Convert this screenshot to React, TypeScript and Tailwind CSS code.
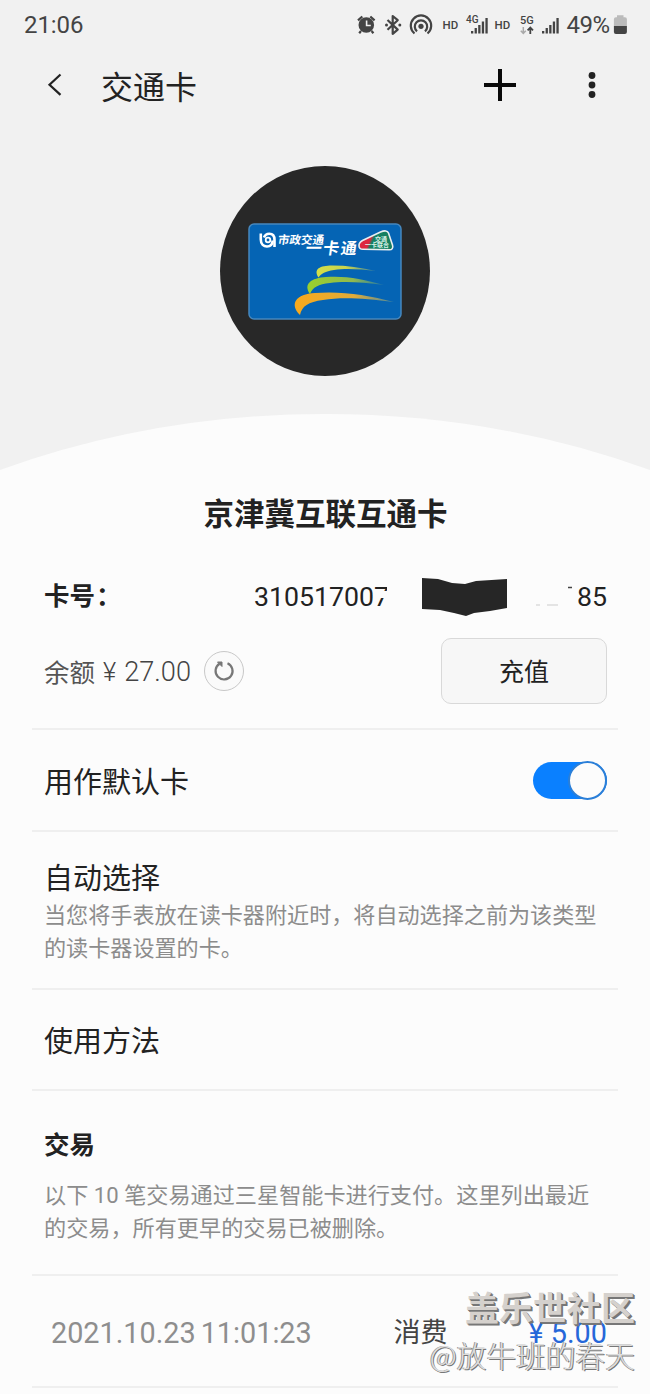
/**
 * TransitCard screen
 *
 * Transit card detail page: balance, default card switch and transactions.
 */

import { useState } from 'react';
import type { ReactNode } from 'react';

interface SectionProps {
  className: string;
  children: ReactNode;
}

interface Transaction {
  date: string;
  time: string;
  type: string;
  amount: string;
}

const transactions: Transaction[] = [
  { date: '2021.10.23', time: '11:01:23', type: '消费', amount: '5.00' },
];

function SignalBars({ className }: { className: string }) {
  return (
    <svg className={className} viewBox="0 0 18 17" fill="#444">
      <rect x="0" y="14" width="2.3" height="2.5" />
      <rect x="3.6" y="11" width="2.3" height="5.5" />
      <rect x="7.2" y="8" width="2.3" height="8.5" />
      <rect x="10.8" y="4.5" width="2.3" height="12" />
      <rect x="14.4" y="1" width="2.3" height="15.5" />
    </svg>
  );
}

function StatusBar() {
  return (
    <div className="relative flex h-[50px] items-center pl-[24px] text-[#444]">
      <span className="text-[24px] leading-none tracking-[-0.1px]">21:06</span>
      <div className="absolute left-[350px] top-0 h-[50px] w-[300px]">
        <svg className="h-full w-full" viewBox="0 0 300 50" fill="none">
          {/* alarm */}
          <circle cx="16.3" cy="25" r="7.8" fill="#444" />
          <path d="M8 20.4 12.3 16.5M24.6 20.4 20.3 16.5M11 31l-1.8 2.2M21.6 31l1.8 2.2" stroke="#444" strokeWidth="2.2" />
          <path d="M16.6 20.5v5h4.2" stroke="#f1f1f1" strokeWidth="1.6" />
          {/* bluetooth */}
          <path d="m37.5 20 10.2 9.6-5 4.2V16l5 4.2L37.5 29.8" stroke="#444" strokeWidth="2.2" strokeLinejoin="round" />
          <circle cx="36.5" cy="25" r="1.5" fill="#444" />
          <circle cx="49.8" cy="25" r="1.5" fill="#444" />
          {/* hotspot */}
          <circle cx="71" cy="26.3" r="2.6" fill="#444" />
          <path d="M67 31.3a6.2 6.2 0 1 1 8 0" stroke="#444" strokeWidth="2.2" />
          <path d="M64.5 33.5a10.2 10.2 0 1 1 13 0" stroke="#444" strokeWidth="2.2" />
          {/* data arrows */}
          <path d="M173.3 27v6M170.8 30.7l2.5 2.6 2.5-2.6" stroke="#aaa" strokeWidth="1.5" />
          <path d="M180.3 34v-6M177.6 30.4l2.7-2.8 2.7 2.8" stroke="#444" strokeWidth="1.8" />
          {/* battery */}
          <path d="M267 15.3h6.5v2h1.4a2 2 0 0 1 2 2V26h-13v-6.7a2 2 0 0 1 2-2h1.1z" fill="#bbb" />
          <path d="M263.9 26h13v6a2 2 0 0 1-2 2h-9a2 2 0 0 1-2-2z" fill="#444" />
          <g fill="#444" fontFamily="Roboto, sans-serif" fontWeight="500">
            <text x="92.5" y="28.7" fontSize="11.5">HD</text>
            <text x="144.5" y="28.7" fontSize="11.5">HD</text>
            <text x="116" y="23" fontSize="10">4G</text>
            <text x="170" y="23.7" fontSize="11">5G</text>
            <text x="216.5" y="32.5" fontSize="24" fontWeight="400" textLength="43.5">49%</text>
          </g>
        </svg>
        <SignalBars className="absolute left-[121px] top-[17px] h-[17px] w-[18px]" />
        <SignalBars className="absolute left-[192px] top-[17px] h-[17px] w-[18px]" />
      </div>
    </div>
  );
}

function AppBar() {
  return (
    <div className="flex h-[70px] items-center pl-[46px] pr-[50px] text-[#222]">
      <svg className="h-[26px] w-[18px]" viewBox="0 0 18 26" fill="none">
        <path d="M14.5 2.5 3.5 12.7l11 10.2" stroke="#222" strokeWidth="2.2" />
      </svg>
      <h1 className="ml-[37px] flex-1 pt-[5px] text-[32px] leading-none">交通卡</h1>
      <svg className="h-[32px] w-[32px]" viewBox="0 0 32 32">
        <path d="M0 16h32M16 0v32" stroke="#0a0a0a" strokeWidth="4" />
      </svg>
      <svg className="ml-[70px] h-[28px] w-[14px]" viewBox="0 0 14 28" fill="#222">
        <circle cx="6" cy="4.5" r="3.4" />
        <circle cx="6" cy="14" r="3.4" />
        <circle cx="6" cy="23.5" r="3.4" />
      </svg>
    </div>
  );
}

function CardArt() {
  return (
    <svg className="mt-[2px] h-[98px] w-[154px]" viewBox="0 0 154 98">
      <defs>
        <linearGradient id="yellow" x1="0" x2="1">
          <stop offset="0" stopColor="#d3df48" />
          <stop offset="0.5" stopColor="#c9d44e" />
          <stop offset="1" stopColor="#377fa0" />
        </linearGradient>
        <linearGradient id="green" x1="0" x2="1">
          <stop offset="0" stopColor="#9bd02c" />
          <stop offset="0.6" stopColor="#8fb950" />
          <stop offset="1" stopColor="#1d74ad" />
        </linearGradient>
        <linearGradient id="orange" x1="0" x2="1">
          <stop offset="0" stopColor="#f9a91b" />
          <stop offset="0.6" stopColor="#e0ac3a" />
          <stop offset="1" stopColor="#4688a0" />
        </linearGradient>
        <linearGradient id="badge" x1="0" y1="0" x2="1" y2="0.25">
          <stop offset="0.42" stopColor="#dc2840" />
          <stop offset="0.5" stopColor="#178061" />
        </linearGradient>
      </defs>
      <rect x="1" y="1" width="152" height="95" rx="5" fill="#0564b4" stroke="#4687bd" strokeWidth="1.5" />
      <path d="M70.5 54.5C65 46 72 42.5 84 42.5c15 0 29 2 44 5.5-16-2-31-3-42-1-9 1.500-12.500 3.500-15.500 7.500z" fill="url(#yellow)" />
      <path d="M62 71C55 61 63 55 78 54c19-1.500 37 2 58 8-22-3-41-4-54-2-12 1.500-17 4-20 11z" fill="url(#green)" />
      <path d="M52 92C41 81 48 71 67 70c27-2 52 2 79 9-31-4-53-5-71-2-15 2-21 6-23 15z" fill="url(#orange)" />
      {/* operator logo */}
      <g fill="none" stroke="#fff">
        <path d="M12.800 10.500v6c0 5 3 7 6.200 7 3.500 0 5.500-2.500 5.700-6" strokeWidth="2.600" />
        <path d="M16 14.500c1-3 3-3.800 5.300-3.800 3.700 0 5.200 2.500 5.200 6v7.300" strokeWidth="2.600" />
        <circle cx="20" cy="17" r="2.300" strokeWidth="1.800" />
      </g>
      <g fill="#fff" fontFamily="'Noto Sans CJK SC', sans-serif" fontWeight="700">
        <text transform="translate(29.5 20.8) skewX(-8)" fontSize="11.5" textLength="46">市政交通</text>
        <text transform="translate(57 30.5) skewX(-8)" fontSize="16" textLength="51">一卡通</text>
      </g>
      <path d="m114.500 17.500 18-8.500c4-1.700 7-1.500 8 1l4 12c1 3-.5 5-3.500 4.800l-26-.5c-5 0-5.500-6-.5-8.800z" fill="url(#badge)" stroke="#e9eef0" strokeWidth="1.600" />
      <g fill="#d9f1e8" fontFamily="'Noto Sans CJK SC', sans-serif" fontWeight="700" fontSize="6">
        <text x="127" y="17.5">交通</text>
        <text x="117" y="24">一卡联合</text>
      </g>
    </svg>
  );
}

function Section({ className, children }: SectionProps) {
  return (
    <section className={`mx-[32px] border-b-2 border-[#efefef] pl-[12px] pr-[11px] ${className}`}>
      {children}
    </section>
  );
}

function CardNumber() {
  return (
    <div className="flex h-[52px] items-center justify-between text-[#222]">
      <span className="text-[25.5px] font-bold leading-none">
        卡号<span className="ml-[1px]">：</span>
      </span>
      <div className="flex items-center text-[26.7px] leading-none">
        <span className="relative">
          310517007
          <svg className="absolute right-0 top-0 h-[27px] w-[15px]" viewBox="0 0 15 27">
            <path d="M0 7h15v7H0z" fill="#fcfcfc" />
            <path d="M13 3h2v20h-2z" fill="#fcfcfc" />
          </svg>
        </span>
        <svg className="ml-[33px] h-[40px] w-[86px]" viewBox="0 0 86 40">
          <path d="M0 1l16 1 14 4 13 1 11-3 31-2v29l-17 3-16 2-8 3-12-3-14-3-18-1z" fill="#262626" />
        </svg>
        <svg className="ml-[27px] h-[40px] w-[42px]" viewBox="0 0 42 40">
          <path d="M1 28h4M12 28h11" stroke="#ccc" strokeWidth="1" />
          <path d="M33 10.5h4" stroke="#444" strokeWidth="1.5" />
        </svg>
        <span>85</span>
      </div>
    </div>
  );
}

function Balance() {
  return (
    <div className="mt-[15px] flex h-[66px] items-center text-[25.5px] leading-none">
      <span className="pt-[5px] text-[#555]">余额</span>
      <span className="ml-[8px] pt-[4px] font-light text-[#444]">¥</span>
      <span className="ml-[8px] pt-[4px] text-[27.2px] font-light text-[#444]">27.00</span>
      <button className="ml-[13px] flex h-[40px] w-[40px] items-center justify-center rounded-full border border-[#c8c8c8] bg-[#fafafa]">
        <svg className="h-[24px] w-[24px]" viewBox="0 0 24 24" fill="none">
          <path d="M15.5 4.200A8.5 8.5 0 1 1 7.5 4.800" stroke="#777" strokeWidth="2.2" />
          <path d="M5.5 3H10v4.500z" fill="#777" stroke="#777" />
        </svg>
      </button>
      <button className="ml-auto h-[66px] w-[166px] rounded-[10px] border border-[#d9d9d9] bg-[#f7f7f7] pt-[3px] text-[25px] text-[#222]">
        充值
      </button>
    </div>
  );
}

function Watermark() {
  return (
    <div className="pointer-events-none absolute right-[15px] top-[1287px] text-right leading-none">
      <div className="text-[34px] font-bold leading-[44px] text-[#d5d1cd] [text-shadow:1px_1px_0_#777,2px_2px_0_#777]">
        盖乐世社区
      </div>
      <div className="font-['Noto_Sans_CJK_SC',sans-serif] text-[29.7px] font-light leading-[48px] text-[#ddd] [text-shadow:1px_1px_0_#777,-1px_0_0_#999]">
        @放牛班的春天
      </div>
    </div>
  );
}

export default function App() {
  const [isDefault, setIsDefault] = useState(true);

  return (
    <div className="relative h-[1394px] w-[650px] overflow-hidden bg-[#f1f1f1] font-[Roboto,'Noto_Sans_CJK_SC',sans-serif]">
      <StatusBar />
      <AppBar />

      <div className="mt-[46px] flex justify-center">
        <div className="flex h-[210px] w-[210px] items-center justify-center rounded-full bg-[#282828]">
          <CardArt />
        </div>
      </div>

      <svg className="mt-[37px] block h-[58px] w-full" viewBox="0 0 650 58">
        <path d="M0 57Q155 1 325 1T650 57V58H0z" fill="#fcfcfc" />
      </svg>

      <main className="h-[930px] bg-[#fcfcfc]">
        <Section className="h-[259px] pt-[24px]">
          <h2 className="text-center text-[30.5px] font-bold leading-[40px] text-[#222]">
            京津冀互联互通卡
          </h2>
          <div className="mt-[36px]">
            <CardNumber />
            <Balance />
          </div>
        </Section>

        <Section className="flex h-[102px] items-center justify-between">
          <span className="pt-[7px] text-[29px] leading-none text-[#222]">用作默认卡</span>
          <button
            role="switch"
            aria-checked={isDefault}
            onClick={() => setIsDefault(!isDefault)}
            className={`flex h-[37px] w-[74px] items-center rounded-full ${
              isDefault ? 'justify-end bg-[#0a80ff]' : 'justify-start bg-[#aaa]'
            }`}
          >
            <span className="h-[39px] w-[39px] shrink-0 rounded-full border-2 border-[#2b7fd8] bg-[#fcfcfc]" />
          </button>
        </Section>

        <Section className="h-[158px] pt-[27px]">
          <h3 className="text-[29px] leading-[40px] text-[#222]">自动选择</h3>
          <p className="-mr-[11px] text-[22.1px] leading-[33px] text-[#8c8c8c]">
            当您将手表放在读卡器附近时，将自动选择之前为该类型
            <br />
            的读卡器设置的卡。
          </p>
        </Section>

        <Section className="flex h-[101px] items-center">
          <span className="pt-[5px] text-[29px] leading-none text-[#222]">使用方法</span>
        </Section>

        <Section className="h-[185px] pt-[36px]">
          <h3 className="text-[25.5px] font-bold leading-[36px] text-[#222]">交易</h3>
          <p className="-mr-[11px] mt-[16px] text-[22.15px] leading-[33px] text-[#8c8c8c]">
            以下 10 笔交易通过三星智能卡进行支付。这里列出最近
            <br />
            的交易，所有更早的交易已被删除。
          </p>
        </Section>

        {transactions.map((item) => (
          <Section key={item.date + item.time} className="flex h-[112px] items-center pt-[4px] text-[28.8px] leading-none">
            <span className="ml-[7px] text-[#8e8e8e]">{item.date}</span>
            <span className="ml-[5px] text-[#8e8e8e]">{item.time}</span>
            <span className="ml-auto pt-[1px] text-[27px] text-[#444]">{item.type}</span>
            <span className="ml-[81px] text-[#2667d9]">¥ {item.amount}</span>
          </Section>
        ))}
      </main>

      <Watermark />
    </div>
  );
}
